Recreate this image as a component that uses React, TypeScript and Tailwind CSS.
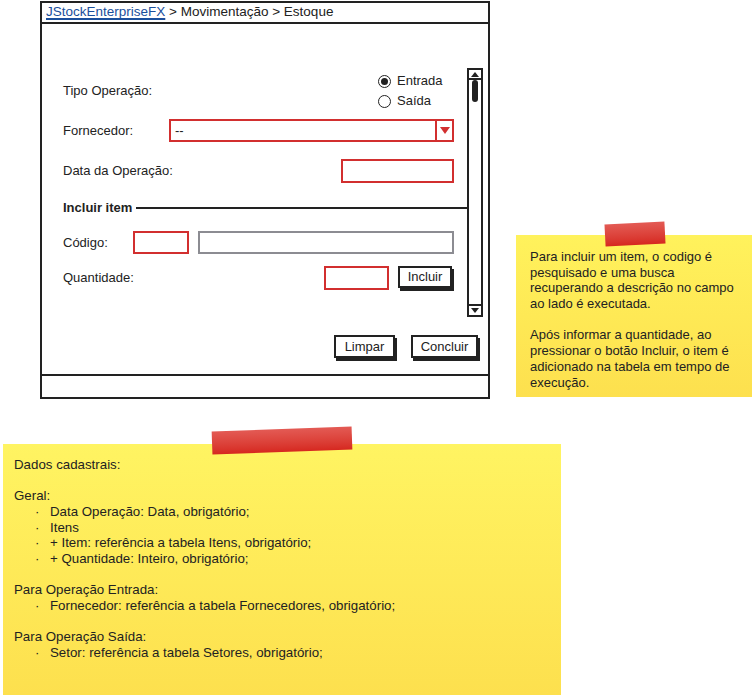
import React from 'react';

const red = 'border-[#d22f2f]';

const Radio = ({ label, checked }: { label: string; checked?: boolean }) => (
  <div className="h-[20px] flex items-center gap-[6px]">
    <div className="w-[13px] h-[13px] rounded-full border-[1.5px] border-[#222] flex items-center justify-center">
      {checked && <div className="w-[7px] h-[7px] rounded-full bg-[#222]" />}
    </div>
    <span>{label}</span>
  </div>
);

const SketchButton = ({ label, className }: { label: string; className: string }) => (
  <div
    className={`border-2 border-[#222] bg-white flex items-center justify-center shadow-[2px_3px_0_#222] ${className}`}
  >
    {label}
  </div>
);

const Scrollbar = () => (
  <div className="ml-[13px] w-[16px] h-[249px] border-2 border-[#222] flex flex-col bg-white">
    <div className="h-[10px] border-b-2 border-[#222] flex items-center justify-center">
      <div className="w-0 h-0 border-l-[4px] border-r-[4px] border-b-[5px] border-l-transparent border-r-transparent border-b-[#222]" />
    </div>
    <div className="flex-1 flex justify-center">
      <div className="w-[6px] h-[22px] rounded-[3px] bg-[#222]" />
    </div>
    <div className="h-[11px] border-t-2 border-[#222] flex items-center justify-center">
      <div className="w-0 h-0 border-l-[4px] border-r-[4px] border-t-[5px] border-l-transparent border-r-transparent border-t-[#222]" />
    </div>
  </div>
);

const Window = () => (
  <div className="mt-[1px] ml-[40px] w-[450px] h-[398px] shrink-0 border-2 border-[#222] flex flex-col bg-white">
    {/* breadcrumb */}
    <div className="h-[21px] border-b-2 border-[#222] pl-[4px] flex items-center whitespace-nowrap text-[13.5px]">
      <span className="text-[#1b4f9c] underline underline-offset-2 decoration-[1.5px]">JStockEnterpriseFX</span>
      <span>&nbsp;&gt; Movimentação &gt; Estoque</span>
    </div>

    <div className="flex-1 flex flex-col pt-[44px] pl-[21px]">
      <div className="flex">
        <div className="w-[391px] flex flex-col">
          <div className="mt-[3px] h-[40px] flex items-center">
            <span className="flex-1">Tipo Operação:</span>
            <div className="w-[76px] flex flex-col">
              <Radio label="Entrada" checked />
              <Radio label="Saída" />
            </div>
          </div>

          <div className="mt-[8px] h-[23px] flex items-center">
            <span className="w-[106px]">Fornecedor:</span>
            <div className={`flex-1 h-full border-2 ${red} flex`}>
              <span className="flex-1 pl-[4px] flex items-center">--</span>
              <div className={`w-[17px] border-l-2 ${red} flex items-center justify-center`}>
                <div className="w-0 h-0 border-l-[5px] border-r-[5px] border-t-[7px] border-l-transparent border-r-transparent border-t-[#d22f2f]" />
              </div>
            </div>
          </div>

          <div className="mt-[17px] h-[24px] flex items-center">
            <span className="flex-1">Data da Operação:</span>
            <div className={`w-[113px] h-full border-2 ${red}`} />
          </div>

          <div className="mt-[17px] h-[16px] flex items-center -mr-[13px]">
            <span className="font-bold">Incluir item</span>
            <div className="flex-1 h-[1.5px] bg-[#222] ml-[4px]" />
          </div>

          <div className="mt-[15px] h-[23px] flex items-center">
            <span className="w-[70px]">Código:</span>
            <div className={`w-[56px] h-full border-2 ${red}`} />
            <div className="flex-1 h-full ml-[9px] border-2 border-[#8c8c92]" />
          </div>

          <div className="mt-[12px] h-[24px] flex items-center">
            <span className="flex-1">Quantidade:</span>
            <div className={`w-[65px] h-full border-2 ${red}`} />
            <SketchButton label="Incluir" className="ml-[9px] mr-[2px] w-[54px] h-[22px] self-start" />
          </div>
        </div>
        <Scrollbar />
      </div>

      <div className="mt-[18px] pr-[10px] flex justify-end gap-[16px]">
        <SketchButton label="Limpar" className="w-[61px] h-[23px]" />
        <SketchButton label="Concluir" className="w-[67px] h-[23px]" />
      </div>
    </div>

    <div className="h-[23px] border-t-2 border-[#222]" />
  </div>
);

const Tape = ({ className }: { className: string }) => (
  <div className={`absolute bg-linear-to-b from-[#e35a54] to-[#d6271f] ${className}`} />
);

const SmallNote = () => {
  const lines = [
    'Para incluir um item, o codigo é',
    'pesquisado e uma busca',
    'recuperando a descrição no campo',
    'ao lado é executada.',
    '',
    'Após informar a quantidade, ao',
    'pressionar o botão Incluir, o item é',
    'adicionado na tabela em tempo de',
    'execução.',
  ];
  return (
    <div className="relative mt-[235px] ml-[26px] w-[236px] h-[162px] shrink-0 bg-linear-to-b from-[#fff25c] to-[#fde04e] pl-[14px] pt-[14px]">
      <Tape className="left-[89px] -top-[12px] w-[60px] h-[22px] -rotate-3" />
      {lines.map((l, i) => (
        <div key={i} className="h-[15.7px] leading-[15.7px] whitespace-nowrap">
          {l}
        </div>
      ))}
    </div>
  );
};

const BigNote = () => {
  const rows: { text: string; bullet?: boolean }[] = [
    { text: 'Dados cadastrais:' },
    { text: '' },
    { text: 'Geral:' },
    { text: 'Data Operação: Data, obrigatório;', bullet: true },
    { text: 'Itens', bullet: true },
    { text: '+ Item: referência a tabela Itens, obrigatório;', bullet: true },
    { text: '+ Quantidade: Inteiro, obrigatório;', bullet: true },
    { text: '' },
    { text: 'Para Operação Entrada:' },
    { text: 'Fornecedor: referência a tabela Fornecedores, obrigatório;', bullet: true },
    { text: '' },
    { text: 'Para Operação Saída:' },
    { text: 'Setor: referência a tabela Setores, obrigatório;', bullet: true },
  ];
  return (
    <div className="relative mt-[45px] ml-[3px] w-[558px] h-[251px] bg-linear-to-b from-[#fff462] to-[#fde04e] pl-[11px] pt-[13px] text-[13.3px]">
      <Tape className="left-[209px] -top-[15px] w-[140px] h-[23px] -rotate-2" />
      {rows.map((r, i) => (
        <div key={i} className="h-[15.67px] leading-[15.67px] whitespace-nowrap flex">
          {r.bullet ? (
            <>
              <span className="w-[36px] pl-[21px]">·</span>
              <span>{r.text}</span>
            </>
          ) : (
            r.text
          )}
        </div>
      ))}
    </div>
  );
};

export default function App() {
  return (
    <div className="w-[755px] h-[698px] overflow-hidden bg-white text-[13px] text-[#222] font-['Liberation_Sans',Arial,sans-serif]">
      <div className="flex items-start">
        <Window />
        <SmallNote />
      </div>
      <BigNote />
    </div>
  );
}
